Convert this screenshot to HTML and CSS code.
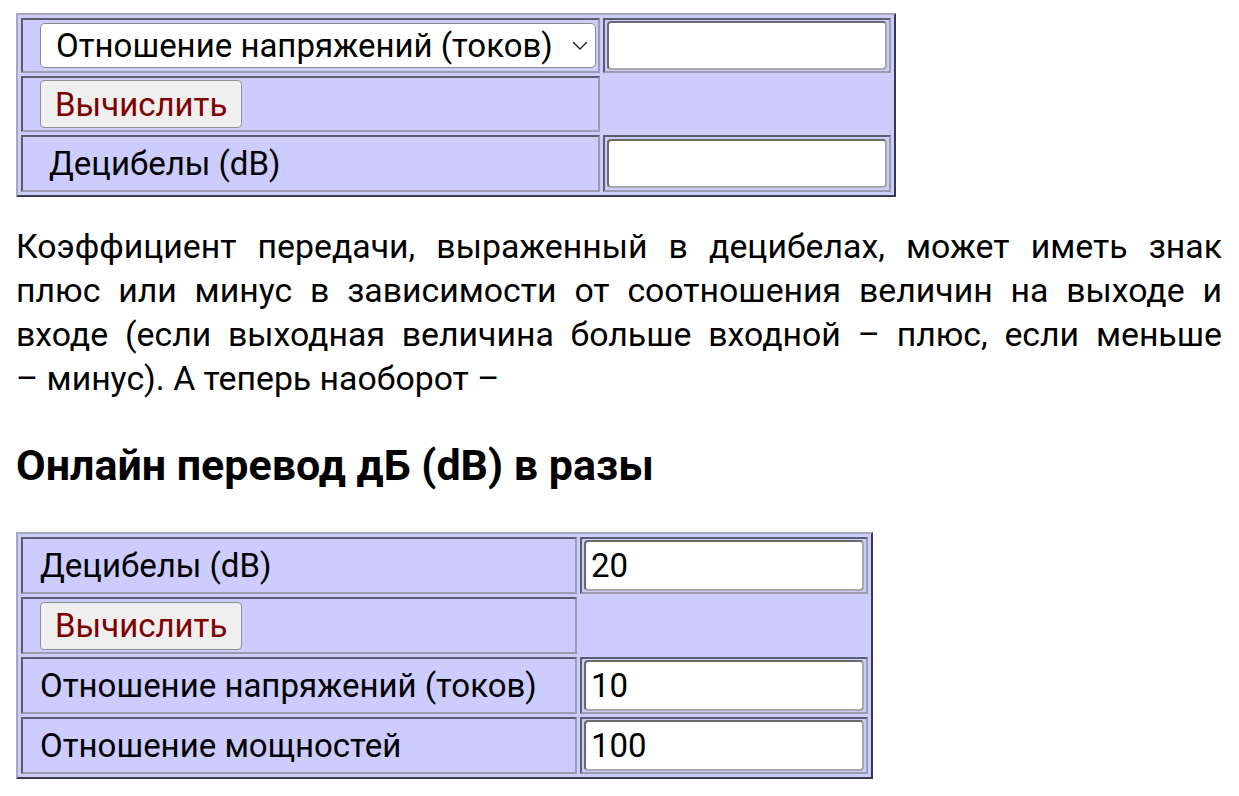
FILE: index.html
```html
<!DOCTYPE html>
<html lang="ru">
<head>
<meta charset="utf-8">
<title>Перевод дБ</title>
<link rel="stylesheet" href="styles.css">
</head>
<body>
<div class="page">
  <table class="calc calc-top">
    <tr class="row row-a">
      <td class="cell cell-first">
        <div class="select">
          <span class="select-text">Отношение напряжений (токов)</span>
          <svg class="chev" width="16" height="9" viewBox="0 0 16 9"><path d="M1 1 L8 8 L15 1" fill="none" stroke="#222" stroke-width="1.4"/></svg>
        </div>
      </td>
      <td class="cell cell-second"><div class="field"></div></td>
    </tr>
    <tr class="row row-b">
      <td class="cell cell-first"><button class="btn">Вычислить</button></td>
    </tr>
    <tr class="row row-c">
      <td class="cell cell-first"><span class="label label-indent">Децибелы (dB)</span></td>
      <td class="cell cell-second"><div class="field"></div></td>
    </tr>
  </table>

  <p class="text">Коэффициент передачи, выраженный в децибелах, может иметь знак плюс или минус в зависимости от соотношения величин на выходе и входе (если выходная величина больше входной – плюс, если меньше <span class="nowrap">– минус).</span> А теперь наоборот –</p>

  <h3 class="title">Онлайн перевод дБ (dB) в разы</h3>

  <table class="calc calc-bottom">
    <tr class="row">
      <td class="cell cell-first"><span class="label">Децибелы (dB)</span></td>
      <td class="cell cell-second"><div class="field">20</div></td>
    </tr>
    <tr class="row">
      <td class="cell cell-first"><button class="btn">Вычислить</button></td>
    </tr>
    <tr class="row">
      <td class="cell cell-first"><span class="label">Отношение напряжений (токов)</span></td>
      <td class="cell cell-second"><div class="field">10</div></td>
    </tr>
    <tr class="row">
      <td class="cell cell-first"><span class="label">Отношение мощностей</span></td>
      <td class="cell cell-second"><div class="field">100</div></td>
    </tr>
  </table>
</div>
</body>
</html>
```

FILE: styles.css
```css
html, body {
  margin: 0;
  padding: 0;
  background: #ffffff;
}
body {
  font-family: Roboto, "Liberation Sans", sans-serif;
  color: #000;
  font-size: 33px;
}
.page {
  padding: 13px 17px 0 16px;
}
.calc {
  background: #ccccff;
  border-collapse: separate;
  border-spacing: 3px;
  border: 2px solid;
  border-color: #a9a9bb #3a3a4a #3a3a4a #a9a9bb;
}
.calc-top { width: 880px; }
.calc-bottom { width: 857px; margin-top: 42px; }
.cell {
  border: 2px solid;
  border-color: #5c5c6c #9c9cae #9c9cae #5c5c6c;
  padding: 0 0 0 17px;
  box-sizing: border-box;
  vertical-align: middle;
}
.calc-top .cell-first { width: 579px; }
.calc-bottom .cell-first { width: 556px; }
.cell-second { padding: 0 2px; }
.calc-bottom .cell { height: 57px; }
.row-a .cell { height: 55px; }
.row-b .cell { height: 56px; }
.row-c .cell { height: 57px; }
.select {
  display: flex;
  align-items: center;
  justify-content: space-between;
  box-sizing: border-box;
  width: 556px;
  height: 45px;
  background: #fff;
  border: 1px solid #8a8a8a;
  border-radius: 5px;
  padding: 0 7px 0 15px;
}
.select-text { line-height: 1; }
.chev { flex: none; }
.field {
  box-sizing: border-box;
  height: 49px;
  background: #fff;
  border: 2px solid;
  border-color: #6a6a6a #a8a8a8 #a8a8a8 #6a6a6a;
  border-radius: 4px;
  padding: 0 5px;
  display: flex;
  align-items: center;
}
.calc-bottom .field { height: 51px; }
.btn {
  font-family: inherit;
  font-size: 33px;
  color: #800000;
  background: #efefef;
  border: 1px solid #8f8f8f;
  border-radius: 4px;
  height: 48px;
  padding: 0 14px;
  margin: 0;
}
.label { line-height: 1; }
.label-indent { padding-left: 9px; }
.text {
  margin: 28px 0 0;
  font-size: 33.8px;
  line-height: 44px;
  text-align: justify;
}
.nowrap { white-space: nowrap; }
.title {
  margin: 39px 0 0;
  font-size: 43px;
  line-height: 50px;
  font-weight: 700;
}
```
